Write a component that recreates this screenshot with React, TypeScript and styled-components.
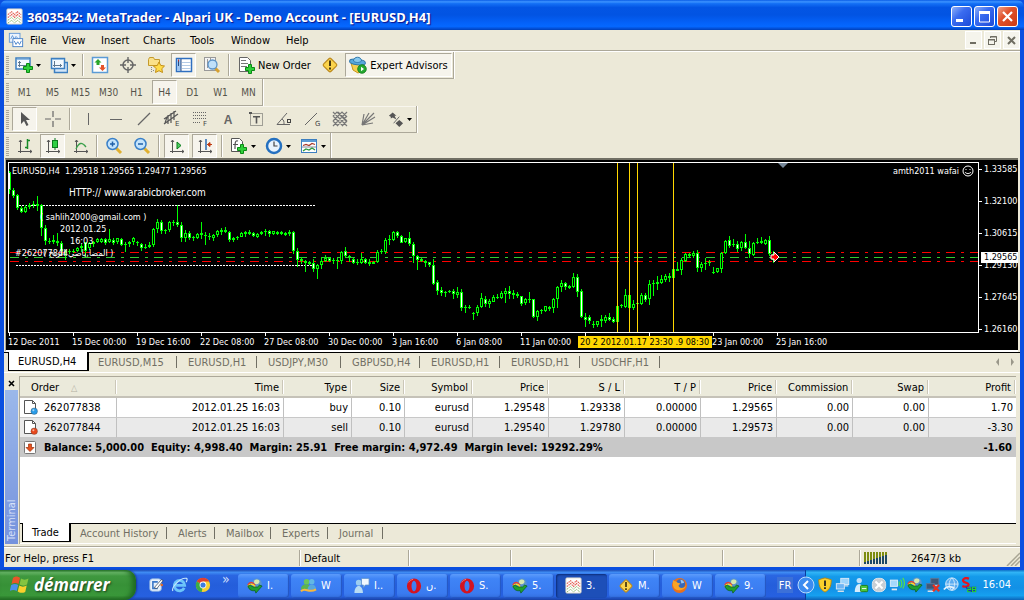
import React from 'react';
import styled, { createGlobalStyle, css } from 'styled-components';

const UI_FONT = '"DejaVu Sans Condensed", "Noto Sans", sans-serif';
const FACE = '#ece9d8';
const SHADE = '#aca899';

const GlobalStyle = createGlobalStyle`
  * { box-sizing: border-box; }
  body { margin: 0; background: #245edb; font-family: ${UI_FONT}; font-size: 11px; line-height: 13px; color: #000; }
  button { font: inherit; color: inherit; background: none; border: 0; padding: 0; margin: 0; cursor: default; }
  svg { display: block; flex: none; }
`;

/* ---------- window frame ---------- */

const Screen = styled.div`
  min-height: 100vh;
  display: flex;
  flex-direction: column;
`;

const AppWindow = styled.main`
  flex: 1;
  display: flex;
  flex-direction: column;
  background: #0a4fe0;
`;

const TitleBar = styled.header`
  height: 30px;
  flex: none;
  display: flex;
  align-items: center;
  padding: 3px 6px 0 6px;
  gap: 4px;
  border-radius: 7px 7px 0 0;
  background: linear-gradient(#0a5ce6 0, #3c93ff 6%, #1470f5 12%, #0355e4 25%, #0254e3 50%, #0461f8 75%, #0568ff 88%, #0350d8 95%, #0040b8 100%);
`;

const Title = styled.h1`
  margin: 0;
  flex: 1;
  color: #fff;
  font: bold 13px/18px "Noto Sans", sans-serif;
  text-shadow: 1px 1px 1px #0f1089;
  white-space: nowrap;
`;

const CaptionButtons = styled.div`
  display: flex;
  gap: 2px;
`;

const CaptionButton = styled.button<{ $close?: boolean }>`
  width: 21px;
  height: 21px;
  display: grid;
  place-items: center;
  border: 1px solid #fff;
  border-radius: 3px;
  background: ${p => p.$close
    ? 'linear-gradient(135deg, #f0a088 0, #e0522c 40%, #cc3a14 100%)'
    : 'linear-gradient(135deg, #8fb0f8 0, #3a6cf0 40%, #1c4ad8 100%)'};
`;

const Client = styled.div`
  flex: 1;
  display: flex;
  flex-direction: column;
  margin: 0 4px 3px;
  background: ${FACE};
`;

const MenuBar = styled.nav`
  height: 22px;
  flex: none;
  display: flex;
  align-items: center;
  padding: 0 0 1px 4px;
  border-bottom: 1px solid #fff;
  box-shadow: inset 0 -1px 0 ${SHADE};
`;

const MenuItem = styled.button<{ $w: number }>`
  width: ${p => p.$w}px;
  padding-left: 6px;
  text-align: left;
`;

const MdiButtons = styled.div`
  display: flex;
  gap: 2px;
  margin-left: auto;
`;

const MdiButton = styled.button`
  width: 17px;
  height: 18px;
  display: grid;
  place-items: center;
  background: #f5f4ec;
  border: 1px solid #fff;
`;

/* ---------- toolbars ---------- */

const Toolbar = styled.div<{ $last?: boolean }>`
  align-self: flex-start;
  flex: none;
  height: ${p => (p.$last ? 25 : 27)}px;
  display: flex;
  align-items: flex-start;
  gap: 3px;
  padding: 1px 1px 0 2px;
  border-right: 1px solid ${SHADE};
  box-shadow: 1px 0 0 #fff, inset 0 1px 0 #f8f6ee;
  border-bottom: ${p => (p.$last ? 0 : 1)}px solid ${SHADE};
`;

const Grip = styled.span`
  width: 3px;
  height: 19px;
  margin-top: 3px;
  background: repeating-linear-gradient(#aaa798 0 1px, ${FACE} 1px 2px);
`;

const ToolButton = styled.button<{ $pressed?: boolean; $w?: number }>`
  width: ${p => p.$w ?? 25}px;
  height: 24px;
  display: flex;
  align-items: center;
  justify-content: center;
  gap: 3px;
  white-space: nowrap;
  color: ${p => (p.$w && p.$w > 60 ? '#000' : '#55534a')};
  ${p => p.$pressed && css`
    background: #f6f4ec;
    border: 1px solid;
    border-color: ${SHADE} #fff #fff ${SHADE};
  `}
`;

const PeriodText = styled.span`
  font-size: 10px;
`;

const Separator = styled.span<{ $m?: number }>`
  width: 2px;
  height: 22px;
  margin: 1px ${p => p.$m ?? 0}px 0;
  border-left: 1px solid ${SHADE};
  border-right: 1px solid #fff;
`;

/* ---------- chart ---------- */

const ChartPanel = styled.section`
  flex: none;
  display: grid;
  grid-template-columns: 1fr 39px;
  grid-template-rows: 171px 17px;
  margin: 0 2px 0 1px;
  padding: 2px 0 0 2px;
  background: #000;
  color: #fff;
  border-top: 2px solid #716f64;
  border-left: 1px solid ${SHADE};
  border-bottom: 2px solid #fff;
  font-size: 9px;
  line-height: 12px;
`;

const Plot = styled.div`
  position: relative;
  border: 1px solid #fff;
  overflow: hidden;
`;

const ChartLabel = styled.span<{ $x: number; $y: number; $large?: boolean }>`
  position: absolute;
  left: ${p => p.$x}px;
  top: ${p => p.$y}px;
  font-size: ${p => (p.$large ? 10 : 9)}px;
  white-space: pre;
`;

const AccountLabel = styled.span`
  position: absolute;
  right: 4px;
  top: 2px;
  display: flex;
  align-items: center;
  gap: 3px;
`;

const ShiftMark = styled.span`
  position: absolute;
  left: 769px;
  top: 0;
  border: 5px solid transparent;
  border-top-color: #778899;
  border-bottom: 0;
`;

const PriceAxis = styled.div`
  position: relative;
  display: flex;
  flex-direction: column;
`;

const PriceTick = styled.span`
  flex: none;
  height: 32px;
  padding-left: 5px;
  background: linear-gradient(#fff, #fff) 0 7px / 3px 1px no-repeat;
  line-height: 15px;
`;

const PriceTag = styled.span`
  position: absolute;
  left: 2px;
  right: 0;
  top: 90px;
  height: 11px;
  padding-left: 3px;
  background: #fff;
  color: #000;
  line-height: 11px;
`;

const TimeAxis = styled.div`
  position: relative;
  display: flex;
  overflow: hidden;
`;

const TimeTick = styled.span`
  flex: none;
  width: 64px;
  height: 17px;
  padding-top: 3px;
  white-space: nowrap;
  background: linear-gradient(#fff, #fff) 1px 0 / 1px 3px no-repeat;
`;

const TimeMark = styled.span`
  position: absolute;
  left: 570px;
  top: 3px;
  width: 134px;
  height: 12px;
  padding-left: 2px;
  background: #ffd700;
  color: #000;
  white-space: nowrap;
`;

/* ---------- tab strips ---------- */

const TabStrip = styled.div<{ $h: number; $indent: number }>`
  flex: none;
  height: ${p => p.$h}px;
  display: flex;
  align-items: flex-start;
  padding-left: ${p => p.$indent}px;
  border-top: 1px solid #000;
  border-bottom: 1px solid #fff;
`;

const Tab = styled.button<{ $w: number; $active?: boolean }>`
  width: ${p => p.$w}px;
  height: 18px;
  flex: none;
  padding-left: 9px;
  text-align: left;
  white-space: nowrap;
  color: #716f64;
  background: linear-gradient(#716f64, #716f64) right 2px top 3px / 1px 12px no-repeat;
  ${p => p.$active && css`
    height: 19px;
    margin-top: -1px;
    color: #000;
    background: #fff;
    border: solid #000;
    border-width: 0 2px 1px 1px;
  `}
`;

const TabScroll = styled.div`
  display: flex;
  gap: 10px;
  margin: 5px 5px 0 auto;
`;

/* ---------- terminal ---------- */

const Terminal = styled.section`
  flex: 1;
  display: flex;
  padding: 3px 0 0 1px;
`;

const TerminalCaption = styled.div`
  width: 13px;
  flex: none;
  display: flex;
  flex-direction: column;
  align-items: center;
`;

const CloseTerminal = styled.button`
  height: 14px;
  width: 13px;
  display: grid;
  place-items: center;
`;

const TerminalTitle = styled.div`
  flex: 1;
  width: 13px;
  padding-top: 3px;
  background: linear-gradient(#7592dd, #9bb8ea);
  color: #d6e0f8;
  writing-mode: vertical-rl;
  transform: rotate(180deg);
  line-height: 13px;
`;

const TerminalBody = styled.div`
  flex: 1;
  display: flex;
  flex-direction: column;
  margin: 0 4px 0 1px;
  border-left: 1px solid ${SHADE};
`;

const OrderArea = styled.div`
  flex: 1;
  min-height: 147px;
  background: #fff;
  border-top: 1px solid ${SHADE};
`;

const OrderTable = styled.table`
  width: 100%;
  border-collapse: separate;
  border-spacing: 0;
  table-layout: fixed;
`;

const HeadCell = styled.th<{ $first?: boolean }>`
  height: 21px;
  padding: 1px 5px 0 11px;
  background: linear-gradient(#fff, #fff) right 0 top 3px / 1px 14px no-repeat,
    linear-gradient(#cbc7b8, #cbc7b8) right 1px top 3px / 1px 14px no-repeat, #ebeadb;
  border-bottom: 2px solid #c5c2b8;
  font-weight: normal;
  text-align: ${p => (p.$first ? 'left' : 'right')};
  white-space: nowrap;
`;

const OrderRow = styled.tr<{ $alt?: boolean }>`
  background: ${p => (p.$alt ? '#eaeaea' : '#fff')};
`;

const Cell = styled.td<{ $last?: boolean }>`
  height: 20px;
  padding: 0 3px 0 4px;
  border-right: ${p => (p.$last ? 0 : 1)}px solid #c0c0c0;
  border-bottom: 1px solid #c8c8c8;
  text-align: right;
  white-space: nowrap;
`;

const OrderId = styled.div`
  display: flex;
  align-items: center;
  gap: 6px;
`;

const SummaryRow = styled.tr`
  background: #c8c8c8;
  font-weight: bold;
`;

const SummaryCell = styled.td<{ $right?: boolean }>`
  height: 19px;
  padding: 0 4px 0 4px;
  text-align: ${p => (p.$right ? 'right' : 'left')};
  white-space: pre;
`;

const SortMark = styled.span`
  color: #b4b1a4;
  margin-left: 12px;
  font-size: 9px;
  line-height: 9px;
`;

/* ---------- status bar ---------- */

const StatusBar = styled.footer`
  flex: none;
  height: 21px;
  margin-top: 2px;
  display: flex;
  align-items: center;
  padding-top: 2px;
  border-top: 1px solid ${SHADE};
  box-shadow: inset 0 1px 0 #fff;
`;

const Pane = styled.div<{ $w?: number; $first?: boolean }>`
  ${p => (p.$w ? `width: ${p.$w}px;` : 'flex: 1;')}
  height: 16px;
  display: flex;
  align-items: center;
  padding-left: ${p => (p.$first ? 1 : 4)}px;
  border-left: ${p => (p.$first ? 0 : 1)}px solid ${SHADE};
  box-shadow: ${p => (p.$first ? 'none' : 'inset 1px 0 0 #fff')};
  white-space: nowrap;
`;

const Traffic = styled.span`
  margin-left: 23px;
`;

const Resize = styled.span`
  margin: 2px 0 0 auto;
`;

/* ---------- taskbar ---------- */

const Taskbar = styled.nav`
  flex: none;
  height: 30px;
  display: flex;
  color: #fff;
  background: linear-gradient(#1f4fb8 0, #3f8cf3 8%, #2a66e2 18%, #245edb 50%, #2660e0 88%, #1941a5 100%);
`;

const StartButton = styled.button`
  width: 136px;
  flex: none;
  display: flex;
  align-items: center;
  gap: 4px;
  padding: 0 0 1px 10px;
  border-radius: 0 10px 12px 0;
  background: linear-gradient(#2f7a2f 0, #6cba6c 8%, #3f983f 20%, #379137 50%, #3a983a 85%, #246e24 100%);
  box-shadow: inset -4px 0 5px #1f6a22, 1px 0 2px #17389a;
  color: #fff;
  font: italic bold 17px/20px "Noto Sans", sans-serif;
  text-shadow: 1px 1px 2px #1c401c;
`;

const QuickLaunch = styled.div`
  width: 102px;
  flex: none;
  display: flex;
  align-items: center;
  gap: 7px;
  padding: 0 0 1px 12px;
`;

const Chevron = styled.span`
  font-size: 14px;
  padding: 0 0 10px 4px;
  color: #cfdffb;
`;

const Tasks = styled.div`
  flex: 1;
  display: flex;
  align-items: center;
  gap: 2px;
  padding-top: 1px;
`;

const TaskButton = styled.button<{ $active?: boolean }>`
  flex: 0 1 51px;
  height: 24px;
  display: flex;
  align-items: center;
  gap: 4px;
  padding-left: 9px;
  border-radius: 3px;
  background: ${p => (p.$active ? '#1d4fb8' : 'linear-gradient(#5c9bfb 0, #3f84f6 20%, #3a7bf0 80%, #336ede 100%)')};
  box-shadow: ${p => (p.$active ? 'inset 1px 1px 2px #0d2d78' : 'inset -1px -1px 1px #2455c0')};
  white-space: nowrap;
`;

const Language = styled.button`
  width: 16px;
  height: 16px;
  margin: 7px 12px 0 0;
  background: #3c70d8;
`;

const Tray = styled.div`
  position: relative;
  width: 219px;
  flex: none;
  display: flex;
  align-items: center;
  gap: 2px;
  padding: 0 13px 1px 11px;
  border-left: 1px solid #0b3c9c;
  background: linear-gradient(#0f72c8 0, #30b4f6 8%, #149aea 22%, #1290e6 60%, #16a0f0 85%, #0c64b8 100%);
`;

const HideIcons = styled.button`
  position: absolute;
  left: -9px;
  top: 6px;
`;

const Clock = styled.time`
  margin-left: auto;
`;

/* ---------- icons ---------- */

type IconProps = { size?: number; children: React.ReactNode };
const Icon = ({ size = 18, children }: IconProps) => (
  <svg width={size} height={size} viewBox="0 0 18 18" fill="none" aria-hidden="true">{children}</svg>
);

const Plus = ({ x, y }: { x: number; y: number }) => (
  <path transform={`translate(${x} ${y})`} d="M3.500.500h3v3h3v3h-3v3h-3v-3h-3v-3h3z" fill="#2fd03a" stroke="#0a8a14" />
);

const DropArrow = () => (
  <svg width="5" height="3" viewBox="0 0 5 3" aria-hidden="true"><path d="M0 0h5L2.500 3z" fill="#000" /></svg>
);

const LogoIcon = ({ size = 16 }: { size?: number }) => (
  <Icon size={size}>
    <rect x="1" y="1" width="16" height="16" rx="1" fill="#fff" stroke="#e4dccc" />
    <path d="M2 7l4-3 3 3 3-3 4 3M2 10l4-3 3 3 3-3 4 3" stroke="#e0564a" strokeWidth="1.200" strokeDasharray="1.500 .7" />
    <path d="M2 13l4-3 3 3 3-3 4 3M2 16l4-3 3 3 3-3 4 3" stroke="#7fb05c" strokeDasharray="1.500 .7" />
  </Icon>
);

const MdiIcon = () => (
  <Icon size={16}>
    <rect x="1.500" y="1.500" width="12" height="10" fill="#eaf3fd" stroke="#5b94d6" />
    <path d="M3 8l2-4 2 4 2-3 2 2" stroke="#5b94d6" />
    <rect x="5.500" y="7.500" width="11" height="9" fill="#fff" stroke="#3f7cc8" />
    <path d="M7 10l2 4 2-3 2 3 2-4" stroke="#3f7cc8" />
  </Icon>
);

const NewChartIcon = () => (
  <Icon>
    <rect x="1" y="2" width="14" height="11" fill="#f4f9fe" stroke="#3d7fc0" strokeWidth="1.500" />
    <path d="M2 3.500h12" stroke="#8fbce6" /><path d="M4.500 5v6M3 9.500h9M3 6.500h3" stroke="#607890" />
    <Plus x={8} y={7} />
  </Icon>
);
const ProfilesIcon = () => (
  <Icon>
    <rect x="4.500" y="6.500" width="13" height="10" fill="#d4e6f8" stroke="#3d7fc0" strokeWidth="1.500" />
    <rect x="1.500" y="2.500" width="13" height="10" fill="#f4f9fe" stroke="#3d7fc0" strokeWidth="1.500" />
    <path d="M2 3.500h12" stroke="#8fbce6" /><path d="M4.500 5v6M3 9.500h9M10.500 8v3" stroke="#607890" />
  </Icon>
);
const MarketWatchIcon = () => (
  <Icon>
    <rect x="1.500" y="1.500" width="15" height="15" fill="#fff" stroke="#5b9bd5" strokeWidth="1.500" />
    <path d="M7 3L3.500 6.500h2V9h3V6.500h2z" fill="#2aa52a" /><path d="M11.500 15L8 11.500h2V9h3v2.500h2z" fill="#e5532a" />
  </Icon>
);
const DataWindowIcon = () => (
  <Icon>
    <circle cx="9" cy="9" r="5" stroke="#666" strokeWidth="1.500" />
    <path d="M9 1v6M9 11v6M1 9h6M11 9h6" stroke="#666" strokeWidth="1.400" />
  </Icon>
);
const FavoritesIcon = () => (
  <Icon>
    <path d="M1.500 3.500l1-2h4l1 2h5v6h-11z" fill="#fbe189" stroke="#c49a2c" />
    <path d="M4.500 11v6M6 14.500h2" stroke="#888" strokeDasharray="1 1" />
    <path d="M12 6l1.700 3.400 3.800.6-2.700 2.700.7 3.800-3.500-1.800-3.500 1.800.7-3.800L6.500 10l3.800-.6z" fill="#ffdc4a" stroke="#c48f14" />
  </Icon>
);
const TerminalIcon = () => (
  <Icon>
    <rect x="1.500" y="2.500" width="15" height="13" fill="#fff" stroke="#2f6fc0" strokeWidth="1.500" />
    <rect x="2" y="3" width="4" height="12" fill="#9cc4f0" />
    <path d="M7 6.500h9M7 9.500h9M7 12.500h9" stroke="#b4cbe6" /><path d="M3.500 4v6M6 3v12" stroke="#2a4a80" /><path d="M3 4.500h1" stroke="#c03030" strokeWidth="2" />
  </Icon>
);
const TesterIcon = () => (
  <Icon>
    <rect x="1.500" y="1.500" width="11" height="13" fill="#f4f4f4" stroke="#999" />
    <path d="M4.500 3v9M7.500 2v4M10.500 4v3" stroke="#999" />
    <path d="M12 12l4 4" stroke="#d6a030" strokeWidth="3" />
    <circle cx="9.500" cy="8.500" r="4.500" fill="#bfe0fa" stroke="#5c93c8" strokeWidth="1.300" />
  </Icon>
);
const NewOrderIcon = () => (
  <Icon>
    <path d="M2.500 1.500h8l3 3v11h-11z" fill="#fff" stroke="#666" />
    <path d="M4 4.500h5M4 7.500h7M4 10.500h6" stroke="#777" /><Plus x={8} y={8} />
  </Icon>
);
const WarnIcon = ({ size = 18 }: { size?: number }) => (
  <Icon size={size}>
    <rect x="3.800" y="3.800" width="10.400" height="10.400" rx="1.500" transform="rotate(45 9 9)" fill="#fbd44c" stroke="#bd8a1c" strokeWidth="1.200" />
    <path d="M8 4.500h2v5.500H8zM8 11.500h2v2H8z" fill="#4a3a10" />
  </Icon>
);
const ExpertIcon = () => (
  <Icon>
    <path d="M2 7l13 1-2 7-4 2-5-3z" fill="#f6cf50" stroke="#c8961c" />
    <ellipse cx="8.500" cy="6" rx="8" ry="2.800" transform="rotate(8 8 6)" fill="#58a8dc" stroke="#2f78ac" />
    <path d="M4.500 5c0-5 8-5 8 0-2 2-6 2-8 0z" fill="#86c8ee" stroke="#2f78ac" />
    <circle cx="13" cy="13" r="4.300" fill="#25a830" stroke="#0c7c18" strokeWidth=".8" /><path d="M12 10.800v4.400l3-2.200z" fill="#fff" />
  </Icon>
);

const CursorIcon = () => (
  <Icon><path d="M5 2v12l3-3 2.500 5 2-1-2.500-5h4z" fill="#555" /></Icon>
);
const line = (d: string, w = 1) => <Icon><path d={d} stroke="#666" strokeWidth={w} /></Icon>;
const smallLetter = (x: number, y: number, s: string) => (
  <text x={x} y={y} fontSize="7" fontFamily="DejaVu Sans" fill="#444">{s}</text>
);
const ChannelIcon = () => (
  <Icon>
    <path d="M1 9L13 1M1 14L15 4M5 14V5M8 13V3M11 10V1M2 13l2-6" stroke="#555" strokeWidth="1.200" />{smallLetter(12, 16, 'E')}
  </Icon>
);
const FiboIcon = () => (
  <Icon>
    <path d="M2 2.500h14M2 5.500h14M2 8.500h14M2 12.500h8" stroke="#666" strokeDasharray="1 1" />{smallLetter(12, 16, 'F')}
  </Icon>
);
const LetterA = () => (
  <Icon><text x="9" y="14" textAnchor="middle" fontSize="12" fontWeight="bold" fontFamily="Liberation Sans" fill="#666">A</text></Icon>
);
const LabelIcon = () => (
  <Icon>
    <rect x="3.500" y="3.500" width="12" height="12" stroke="#555" strokeDasharray="1 1" />
    <path d="M2 2h3v2H2z" fill="#555" /><path d="M6 6.800h7M9.500 6v7.500" stroke="#555" strokeWidth="1.600" />
  </Icon>
);
const AngleIcon = () => (
  <Icon><path d="M12 3L2 14.500h13M7 9c2 1 2 3 2 5" stroke="#666" /><rect x="12.500" y="9.500" width="3" height="3" stroke="#444" /></Icon>
);
const GannLineIcon = () => (
  <Icon><path d="M2 15L14 3" stroke="#666" />{smallLetter(12, 16, 'G')}</Icon>
);
const GridIcon = () => (
  <Icon>
    <path d="M2 6l4-4 10 10M2 11l9-9 5 5M2 16L16 2M6 16L16 6M11 16l5-5M2 11l5 5M2 6l10 10M2 2l14 14M7 2l9 9" stroke="#777" strokeWidth="1.200" />
  </Icon>
);
const FanIcon = () => (
  <Icon><path d="M3 15L5 4M3 15L10 3M3 15L15 3M3 15L16 7M3 15L14 13" stroke="#777" strokeWidth="1.200" /></Icon>
);
const ArrowsIcon = () => (
  <Icon size={17}>
    <path d="M2 5l4-3.500 4 3.500H8l2 4-4-2-2 1V6zM9 13l4-3.500 4 3.500-4 4z" fill="#555" /><path d="M13 6l-6 7" stroke="#666" />
  </Icon>
);

const axes = <path d="M4.500 3v13M2 14.500h14M3 5l1.500-2L6 5M14 13l2 1.500-2 1.500" stroke="#555" />;
const BarsIcon = () => <Icon>{axes}<path d="M11.500 2v10M9 10.500h2.500M11.500 3.500H14" stroke="#168a28" strokeWidth="1.500" /></Icon>;
const CandlesIcon = () => (
  <Icon>{axes}<path d="M11 1v12" stroke="#0a7a1c" /><rect x="8.500" y="3.500" width="5" height="7" fill="#2ed043" stroke="#0a7a1c" /></Icon>
);
const LineIcon = () => <Icon>{axes}<path d="M4 12c3-7 6-7 10-2" stroke="#3aa04a" strokeWidth="1.300" /></Icon>;
const ZoomIcon = ({ out }: { out?: boolean }) => (
  <Icon>
    <path d="M11 11l5 5" stroke="#e0b030" strokeWidth="3" />
    <circle cx="7.500" cy="7" r="5.500" fill="#c4e4fc" stroke="#3a80c8" strokeWidth="1.500" />
    <path d={out ? 'M5 7h5' : 'M5 7h5M7.500 4.500v5'} stroke="#2060a8" strokeWidth="1.500" />
  </Icon>
);
const AutoScrollIcon = () => <Icon>{axes}<path d="M9 5v7l4-3.500z" fill="#4cd060" stroke="#0a7a1c" /></Icon>;
const ShiftIcon = () => (
  <Icon>{axes}<path d="M10 2v11" stroke="#2a6ab0" strokeWidth="1.500" /><path d="M11 7.500h5M14 5.500l-2.500 2 2.500 2z" stroke="#c03a10" fill="#c03a10" /></Icon>
);
const IndicatorIcon = () => (
  <Icon>
    <path d="M1.500 1.500h8l3 3v10h-11z" fill="#fff" stroke="#555" />
    <path d="M8 4c-3-1-3 2-3 8M3 7.500h5" stroke="#555" strokeWidth="1.200" /><Plus x={7} y={7} />
  </Icon>
);
const ClockIcon = () => (
  <Icon>
    <circle cx="9" cy="9" r="7" fill="#e8f3fd" stroke="#2470c0" strokeWidth="2.500" />
    <path d="M9 4.500V9h3.500" stroke="#444" strokeWidth="1.200" />
  </Icon>
);
const TemplateIcon = () => (
  <Icon>
    <rect x="1.500" y="2.500" width="15" height="13" fill="#fff" stroke="#3d7fc0" /><path d="M2 4h14" stroke="#5b9bd5" strokeWidth="2" />
    <path d="M3 8.500l3-1 3 1 3-2 3 1" stroke="#a83a2a" strokeWidth="1.300" /><path d="M2 10h14" stroke="#889" />
    <path d="M3 14l3-2 3 1 3-2 3 2" stroke="#2a9a3a" strokeWidth="1.300" />
  </Icon>
);

const OrderDoc = ({ color }: { color: string }) => (
  <svg width="14" height="15" viewBox="0 0 14 15" aria-hidden="true">
    <path d="M.5.500h8l3 3v10H.5z" fill="#fff" stroke="#555" /><path d="M8.500.500v3h3" fill="none" stroke="#555" />
    <circle cx="10.200" cy="11.200" r="3.300" fill={color} stroke="#333" strokeOpacity=".5" strokeWidth=".6" />
    <circle cx="9.400" cy="10.200" r="1" fill="#fff" fillOpacity=".6" />
  </svg>
);
const BalanceIcon = () => (
  <svg width="14" height="15" viewBox="0 0 14 15" aria-hidden="true">
    <rect x=".5" y="1.500" width="11" height="12" rx="1" fill="#fff" stroke="#777" />
    <path d="M4.500 4h3v3.500H10L6 11.500 2 7.500h2.500z" fill="#e8501c" stroke="#98300c" strokeWidth=".7" />
  </svg>
);

const WindowsFlag = () => (
  <svg width="20" height="19" viewBox="0 0 20 19" aria-hidden="true">
    <path d="M3 3c2-2 5-2 7 0L8.500 9C6.500 7.500 4 7.500 1.500 9z" fill="#e8562a" />
    <path d="M11 3.500c2 1.500 5 1.500 7.500 0L17 9.500c-2 1.500-5 1.500-7.500 0z" fill="#84c440" />
    <path d="M1.200 10c2.500-1.500 5-1.500 7 0l-1.500 6c-2-1.500-4.500-1.500-7 0z" fill="#4a90ec" />
    <path d="M9.200 10.500c2.500 1.500 5 1.500 7.500 0L15.200 17c-2.500 1.200-5.500 1.200-7.500-.5z" fill="#fad02c" />
  </svg>
);
const DesktopIcon = () => (
  <Icon size={16}>
    <rect x="2" y="2" width="13" height="14" rx="3" fill="#e8f2fc" stroke="#88aee0" />
    <path d="M11 5.500H5.500v7.500H11" stroke="#3a78c8" strokeWidth="1.800" /><path d="M7 12l8-9 2 1-7 9z" fill="#fff" stroke="#345" strokeWidth=".8" />
    <circle cx="15.500" cy="9" r="1.500" fill="#e06a2a" />
  </Icon>
);
const IeIcon = ({ size = 17 }: { size?: number }) => (
  <Icon size={size}>
    <path d="M14 12.500A5.500 5.500 0 1 1 14.500 10H5" stroke="#6cc4fa" strokeWidth="3" />
    <path d="M2 16C0 12 10 1 16.500 2.500c1 .5.500 2.500-.5 4" stroke="#c4e6fc" strokeWidth="1.200" />
  </Icon>
);
const ChromeIcon = () => (
  <Icon size={16}>
    <circle cx="9" cy="9" r="8" fill="#f8d030" /><path d="M9 9L2 5a8 8 0 0 1 14 0H9z" fill="#e04030" />
    <path d="M9 9l-1.500 8A8 8 0 0 1 2 5z" fill="#3cab48" /><circle cx="9" cy="9" r="3.800" fill="#fff" /><circle cx="9" cy="9" r="2.900" fill="#3c7ce0" />
  </Icon>
);
const IdmIcon = () => (
  <Icon size={16}>
    <circle cx="11" cy="6" r="5.500" fill="#5a94cc" /><path d="M8 3c2-2 6-2 6 1s-4 4-6 2z" fill="#d6e8b0" />
    <path d="M1 8c2-4 5-4 8 0" stroke="#e84030" strokeWidth="1.800" /><path d="M1 10c2-4 6-4 8 0" stroke="#f8d830" strokeWidth="1.800" />
    <path d="M1 9c1 5 6 6 8 5l1 3 7-8-3-1-2 2c-4 0-5 1-8-2z" fill="#1fa030" stroke="#0c5c18" strokeWidth=".8" />
  </Icon>
);
const MessengerIcon = () => (
  <Icon size={17}>
    <circle cx="7" cy="5" r="3" fill="#6cc45c" /><path d="M1 13c0-7 11-7 11 0z" fill="#5cb450" />
    <circle cx="12.500" cy="5" r="2.800" fill="#62b8e4" /><path d="M8 14c0-8 9-8 9-1z" fill="#58a8dc" />
    <path d="M1 15c5-5 8 3 16-2" stroke="#f8b83c" strokeWidth="2.200" />
  </Icon>
);
const ChatIcon = () => (
  <Icon size={17}>
    <circle cx="6" cy="6" r="3" fill="#9ccdf0" /><path d="M1.500 17c0-10 9-10 9 0z" fill="#b8dcf4" />
    <path d="M9 1.500h8v7h-4l-2 3v-3H9z" fill="#f0f8ff" stroke="#5c90c8" strokeWidth=".8" />
  </Icon>
);
const OperaIcon = () => (
  <Icon size={16}>
    <path fillRule="evenodd" d="M9 .5a8 8.500 0 0 1 0 17a8 8.500 0 0 1 0-17zM9 3a2.800 6 0 0 0 0 12a2.800 6 0 0 0 0-12z" fill="#d41420" />
    <path d="M3 5c1-2 3-3 5-3.500" stroke="#f08080" />
  </Icon>
);
const FirefoxIcon = () => (
  <Icon size={17}>
    <circle cx="9" cy="9" r="8" fill="#e8701c" /><circle cx="10" cy="7.500" r="5" fill="#3868b8" />
    <path d="M2 3c1 2 3 1 5 3l3 1-2 2c0 3 5 4 8 0-1 6-13 8-14-1z" fill="#f8a424" />
    <path d="M10 3c2 0 3 1 4 3l-3 1z" fill="#9cc8f0" />
  </Icon>
);
const ShieldIcon = () => (
  <Icon size={16}><path d="M9 1l7 2c0 8-2 11-7 14C4 14 2 11 2 3z" fill="#fbd02c" stroke="#b8860c" /><path d="M8 4h2v6H8zM8 11.500h2v2H8z" fill="#222" /></Icon>
);
const NetworkIcon = ({ off }: { off?: boolean }) => (
  <Icon size={16}>
    <rect x="6.500" y="1.500" width="9" height="7" fill={off ? '#3f5878' : '#9cd4fc'} stroke={off ? '#5c7898' : '#e0ecf8'} />
    <rect x="1.500" y="7.500" width="9" height="6" fill={off ? '#3f5878' : '#6cb4f4'} stroke={off ? '#5c7898' : '#e0ecf8'} /><path d="M3 16h7M11 10h4" stroke="#d6dfe8" strokeWidth="1.500" />
    {off && <path d="M9 9l7 7M16 9l-7 7" stroke="#e83020" strokeWidth="2.500" />}
  </Icon>
);
const BuddyIcon = () => (
  <Icon size={16}><circle cx="7" cy="4" r="3" fill="#bfe0fa" /><path d="M2 17c0-12 10-12 10 0z" fill="#d6ecfc" /><rect x="8.500" y="9.500" width="8" height="7" rx="1" fill="#4cc43c" stroke="#1c7c14" /><path d="M10 13h5" stroke="#fff" /></Icon>
);
const SkypeIcon = () => (
  <Icon size={16}><rect x="1.500" y="1.500" width="15" height="15" rx="6" fill="#c8ced4" stroke="#e4e8ec" /><path d="M5 5l8 8M13 5l-8 8" stroke="#fff" strokeWidth="2.200" /></Icon>
);
const WirelessIcon = () => (
  <Icon size={16}><rect x="1.500" y="3.500" width="8" height="7" fill="#a4d8fc" stroke="#e4f0fa" /><path d="M3 14h6" stroke="#dfe8f0" strokeWidth="2" /><path d="M11 5c1 2 1 3 0 5M13 3c2 3 2 6 0 9M15.500 1c2.500 4 2.500 8 0 12" stroke="#58e048" strokeWidth="1.300" /></Icon>
);
const GlobeIcon = () => (
  <Icon size={16}><circle cx="10" cy="8" r="7" fill="#5cacf0" stroke="#e4f2fc" /><path d="M3 8h14M10 1c-4 4-4 10 0 14M10 1c4 4 4 10 0 14" stroke="#d6ecfc" /><path d="M1 14c3-4 8-4 12-1" stroke="#e4f2fc" strokeWidth="2" /></Icon>
);
const SIcon = () => (
  <Icon size={16}>
    <path d="M9 2C5 0 1.500 2 2.500 4.500c1 2.500 6 1.500 6 4s-4 3-7 1.500" stroke="#e8141c" strokeWidth="2.500" />
    <path d="M5 11h12v6H8z" fill="#1838b8" />
    <path d="M7 12h4v2H7.500v2.500H11M13 11.500v5h3.500v-5zM13 14h3" stroke="#28d828" strokeWidth="1.200" />
  </Icon>
);

/* ---------- chart data ---------- */

// high, body top, body bottom, low, falling flag; three units to a pixel
type Candle = [number, number, number, number, number];
const UNITS = 3;
const ORIGIN = 8;
const STEP = 4;

const candles: Candle[] = [
  [48,50,105,118,1],[98,105,122,130,1],[117,120,158,165,1],[153,160,170,173,1],[150,155,170,175,0],[145,151,157,162,0],[139,147,150,160,0],[123,147,153,168,0],
  [147,150,218,242,1],[210,220,258,270,1],[248,257,260,268,0],[240,254,260,268,0],[233,257,263,272,1],[257,265,288,300,1],[285,289,292,315,1],[283,287,290,297,0],
  [283,287,291,295,0],[275,278,288,292,0],[268,273,280,290,0],[260,262,288,305,1],[262,265,278,285,0],[258,262,267,275,0],[250,252,262,265,0],[248,252,262,265,0],
  [248,252,263,270,1],[222,252,262,265,0],[248,255,265,270,1],[248,250,262,268,0],[250,252,270,272,1],[262,267,270,290,0],[257,262,267,275,0],[247,250,262,270,0],
  [258,260,265,272,1],[265,268,278,288,1],[268,275,278,283,0],[262,270,276,280,0],[218,222,270,275,0],[193,202,222,235,0],[195,202,227,238,1],[222,226,228,238,0],
  [197,202,226,230,0],[195,200,205,213,0],[150,202,210,215,1],[200,210,250,260,1],[225,235,250,262,0],[228,235,250,255,1],[243,247,250,257,0],[235,238,250,252,0],
  [200,235,240,252,1],[232,240,243,270,1],[235,243,247,255,1],[238,240,248,258,0],[225,228,240,245,0],[218,225,232,240,0],[217,226,232,235,1],[228,230,255,262,1],
  [245,248,254,262,0],[243,247,250,255,0],[232,235,245,247,0],[227,230,237,247,0],[225,232,238,240,1],[232,235,242,247,1],[233,237,245,250,0],[228,230,238,240,0],
  [222,229,231,243,0],[225,229,237,245,1],[227,229,237,240,0],[227,230,236,239,1],[227,231,236,240,1],[232,234,240,243,1],[225,230,238,242,0],[228,230,288,298,1],
  [280,288,315,335,1],[307,312,318,328,1],[315,318,323,350,1],[318,321,326,330,1],[313,324,342,350,1],[328,330,342,372,0],[305,318,330,342,0],[300,308,318,320,0],
  [305,308,318,322,1],[310,315,317,328,0],[308,314,316,342,0],[288,290,318,328,0],[275,288,302,310,1],[300,302,304,320,0],[310,313,323,328,1],[312,320,322,330,0],
  [293,312,324,327,0],[310,313,324,328,1],[313,322,326,333,1],[318,320,327,328,0],[285,290,320,325,0],[282,288,291,298,0],[248,255,290,297,0],[240,252,255,270,0],
  [228,232,254,258,0],[228,232,243,248,1],[240,243,263,265,1],[248,250,262,265,0],[230,250,268,272,1],[262,267,304,323,1],[300,304,314,345,1],[308,313,318,322,1],
  [315,318,323,335,1],[320,322,331,335,1],[313,330,386,390,1],[375,382,407,420,1],[395,405,415,423,1],[407,411,414,425,0],[405,408,410,413,0],[403,408,418,432,1],
  [397,410,419,428,0],[402,410,460,467,1],[450,457,460,473,0],[450,456,459,462,0],[470,473,476,495,0],[450,457,475,482,0],[413,430,457,460,0],[423,432,446,455,1],
  [433,438,446,460,0],[420,427,440,440,0],[418,427,430,432,0],[407,415,430,432,0],[398,408,416,443,0],[392,408,416,432,1],[405,415,420,432,1],[410,417,424,430,1],
  [422,424,446,453,1],[430,433,445,450,0],[410,432,434,445,0],[432,433,487,490,1],[465,468,487,498,0],[462,466,468,477,0],[452,454,467,470,0],[452,455,462,468,1],
  [428,433,460,473,0],[392,395,433,460,0],[375,385,396,410,0],[382,385,397,405,1],[390,394,398,402,0],[353,366,396,400,0],[357,367,410,425,1],[402,408,487,488,1],
  [473,487,496,515,1],[480,487,498,507,1],[498,507,511,518,1],[497,499,511,515,0],[480,492,499,517,0],[480,487,497,503,0],[475,487,495,497,1],[487,491,502,505,1],
  [450,452,502,503,0],[447,450,454,458,1],[403,420,455,458,0],[420,421,458,460,1],[435,446,458,465,0],[443,445,447,450,0],[415,420,446,450,0],[413,420,434,440,1],
  [375,387,433,450,0],[375,383,388,422,0],[363,382,386,405,0],[360,372,384,388,0],[358,363,374,382,0],[353,363,370,380,1],[342,343,370,372,0],[322,343,347,348,0],
  [310,316,346,360,0],[293,297,317,322,0],[295,298,304,308,1],[288,293,303,308,0],[285,293,338,350,1],[320,328,338,350,0],[310,323,328,345,0],[315,320,325,333,1],
  [335,351,355,356,0],[338,340,352,353,0],[292,295,341,353,0],[254,257,295,297,0],[243,256,272,278,1],[252,266,269,277,0],[258,267,281,290,1],[258,262,280,287,0],
  [237,262,280,282,1],[258,279,298,308,1],[262,264,299,302,0],[250,260,265,267,0],[247,258,263,268,1],[253,256,267,270,0],[243,256,298,302,1],[288,298,315,323,0],
];

const px = (v: number) => Math.round(v / UNITS) - ORIGIN;

const Candles = () => (
  <g shapeRendering="crispEdges">
    {candles.map(([h, t, b, l, down], i) => {
      const x = i * STEP;
      const top = px(t);
      const height = Math.max(1, px(b) - top);
      return (
        <g key={i}>
          <rect x={x} y={px(h)} width="1" height={Math.max(1, px(l) - px(h))} fill="#0f0" />
          <rect x={x - 1} y={top} width="3" height={height} fill="#0f0" />
          {height > 2 && <rect x={x} y={top + 1} width="1" height={height - 2} fill={down ? '#fff' : '#000'} />}
        </g>
      );
    })}
  </g>
);

const levels = [
  { y: 89, color: '#f00' },
  { y: 94, color: '#32cd32' },
  { y: 98, color: '#f00' },
];
const verticals = [608, 620, 628, 664];
const prices = ['1.33585', '1.32100', '1.30615', '1.29130', '1.27645', '1.26160'];
const times = ['12 Dec 2011', '15 Dec 00:00', '19 Dec 16:00', '22 Dec 08:00', '27 Dec 08:00', '30 Dec 00:00', '3 Jan 16:00', '6 Jan 08:00', '11 Jan 00:00', '', '', '23 Jan 00:00', '25 Jan 16:00'];

const Chart = () => (
  <ChartPanel aria-label="EURUSD,H4 chart">
    <Plot>
      <svg width="100%" height="169" aria-hidden="true">
        <g shapeRendering="crispEdges">
          <path d="M7 42.500h299M7 102.500h299" stroke="#fff" strokeDasharray="2 1" />
          {levels.map(l => (
            <line key={l.y} x1="1" x2="100%" y1={l.y + 0.5} y2={l.y + 0.5} stroke={l.color} strokeDasharray="9 6 3 6" />
          ))}
        </g>
        <Candles />
        <g shapeRendering="crispEdges">
          {verticals.map(x => <rect key={x} x={x} y="0" width="1" height="169" fill="#ffd700" />)}
        </g>
        <path d="M762 92h3v-3l5 5-5 5v-3h-3z" fill="#f00" stroke="#fff" />
      </svg>
      <ChartLabel $x={3} $y={2}>{'EURUSD,H4  1.29518 1.29565 1.29477 1.29565'}</ChartLabel>
      <ChartLabel $x={60} $y={24} $large>HTTP:// www.arabicbroker.com</ChartLabel>
      <ChartLabel $x={31} $y={48}>( sahlih2000@gmail.com )</ChartLabel>
      <ChartLabel $x={51} $y={60}>2012.01.25</ChartLabel>
      <ChartLabel $x={61} $y={72}>16:03</ChartLabel>
      <ChartLabel $x={6} $y={84}>#262077844</ChartLabel>
      <ChartLabel $x={34} $y={84}>( المضا,ياضي الربح )</ChartLabel>
      <ShiftMark />
      <AccountLabel>
        amth2011 wafai
        <svg width="12" height="12" viewBox="0 0 12 12" fill="none" stroke="#fff" aria-hidden="true">
          <circle cx="6" cy="6" r="5" /><path d="M4 4v1M8 4v1M3 7c1 2 5 2 6 0" />
        </svg>
      </AccountLabel>
    </Plot>
    <PriceAxis>
      {prices.map(p => <PriceTick key={p}>{p}</PriceTick>)}
      <PriceTag>1.29565</PriceTag>
    </PriceAxis>
    <TimeAxis>
      {times.map((t, i) => <TimeTick key={i}>{t}</TimeTick>)}
      <TimeMark>20 2 2012.01.17 23:30 .9 08:30</TimeMark>
    </TimeAxis>
  </ChartPanel>
);

/* ---------- page data ---------- */

const menus: [string, number][] = [['File', 32], ['View', 39], ['Insert', 42], ['Charts', 47], ['Tools', 41], ['Window', 55], ['Help', 40]];
const periods = ['M1', 'M5', 'M15', 'M30', 'H1', 'H4', 'D1', 'W1', 'MN'];
const chartTabs: [string, number][] = [['EURUSD,M15', 90], ['EURUSD,H1', 80], ['USDJPY,M30', 84], ['GBPUSD,H4', 79], ['EURUSD,H1', 80], ['EURUSD,H1', 80], ['USDCHF,H1', 80]];
const terminalTabs: [string, number][] = [['Account History', 98], ['Alerts', 48], ['Mailbox', 56], ['Experts', 57], ['Journal', 55]];
const columns: [string, number | undefined][] = [
  ['Order', 97], ['Time', 167], ['Type', 68], ['Size', 53], ['Symbol', 68], ['Price', 76], ['S / L', 76],
  ['T / P', 76], ['Price', 76], ['Commission', 76], ['Swap', 76], ['Profit', undefined],
];
const orders = [
  { id: '262077838', color: '#2a9ce8', cells: ['2012.01.25 16:03', 'buy', '0.10', 'eurusd', '1.29548', '1.29338', '0.00000', '1.29565', '0.00', '0.00', '1.70'] },
  { id: '262077844', color: '#e8481c', cells: ['2012.01.25 16:03', 'sell', '0.10', 'eurusd', '1.29540', '1.29780', '0.00000', '1.29573', '0.00', '0.00', '-3.30'] },
];
const panes = [102, 71, 72, 69, 71, 66];
const tasks: [React.ReactNode, string, boolean?][] = [
  [<IdmIcon />, 'I.'], [<MessengerIcon />, 'W'], [<ChatIcon />, 'I..'], [<OperaIcon />, 'ں.'], [<OperaIcon />, 'S.'],
  [<IdmIcon />, '5.'], [<LogoIcon size={17} />, '3.', true], [<WarnIcon size={16} />, 'M.'], [<FirefoxIcon />, 'W'], [<IdmIcon />, '9.'],
];

const Drop = ({ label, children }: { label: string; children: React.ReactNode }) => (
  <ToolButton $w={32} aria-label={label}>{children}<DropArrow /></ToolButton>
);

export default function App() {
  return (
    <Screen>
      <GlobalStyle />
      <AppWindow>
        <TitleBar>
          <LogoIcon size={17} />
          <Title>3603542: MetaTrader - Alpari UK - Demo Account - [EURUSD,H4]</Title>
          <CaptionButtons>
            <CaptionButton aria-label="Minimize"><svg width="13" height="13"><rect x="1" y="9" width="7" height="3" fill="#fff" /></svg></CaptionButton>
            <CaptionButton aria-label="Maximize"><svg width="13" height="13"><path d="M1.500 2v10h10V2" fill="none" stroke="#fff" /><rect x="1" y="1" width="11" height="3" fill="#fff" /></svg></CaptionButton>
            <CaptionButton $close aria-label="Close"><svg width="13" height="13"><path d="M2 2l9 9M11 2l-9 9" stroke="#fff" strokeWidth="2.200" /></svg></CaptionButton>
          </CaptionButtons>
        </TitleBar>
        <Client>
          <MenuBar>
            <MdiIcon />
            {menus.map(([m, w]) => <MenuItem key={m} $w={w}>{m}</MenuItem>)}
            <MdiButtons>
              <MdiButton aria-label="Minimize chart"><svg width="11" height="11"><rect x="2" y="7" width="6" height="2" fill="#6f6d62" /></svg></MdiButton>
              <MdiButton aria-label="Restore chart"><svg width="11" height="11" fill="none" stroke="#6f6d62"><path d="M3.500 3V1.500h6v5H8M3 2h7" /><rect x="1.500" y="4.500" width="6" height="5" /><path d="M1 5h7" /></svg></MdiButton>
              <MdiButton aria-label="Close chart"><svg width="11" height="11"><path d="M2 2l7 7M9 2l-7 7" stroke="#6f6d62" strokeWidth="2" /></svg></MdiButton>
            </MdiButtons>
          </MenuBar>

          <Toolbar>
            <Grip />
            <Drop label="New chart"><NewChartIcon /></Drop>
            <Drop label="Profiles"><ProfilesIcon /></Drop>
            <Separator />
            <ToolButton aria-label="Market Watch"><MarketWatchIcon /></ToolButton>
            <ToolButton aria-label="Data Window"><DataWindowIcon /></ToolButton>
            <ToolButton aria-label="Navigator"><FavoritesIcon /></ToolButton>
            <ToolButton $pressed aria-label="Terminal"><TerminalIcon /></ToolButton>
            <ToolButton aria-label="Strategy Tester"><TesterIcon /></ToolButton>
            <Separator $m={1} />
            <ToolButton $w={80}><NewOrderIcon />New Order</ToolButton>
            <ToolButton aria-label="MetaEditor"><WarnIcon /></ToolButton>
            <ToolButton $w={107} $pressed><ExpertIcon />Expert Advisors</ToolButton>
          </Toolbar>
          <Toolbar>
            <Grip />
            {periods.map(p => <ToolButton key={p} $pressed={p === 'H4'}><PeriodText>{p}</PeriodText></ToolButton>)}
          </Toolbar>
          <Toolbar>
            <Grip />
            <ToolButton $pressed aria-label="Cursor"><CursorIcon /></ToolButton>
            <ToolButton aria-label="Crosshair">{line('M9 1v6M9 11v6M1 9h6M11 9h6', 1.2)}</ToolButton>
            <Separator $m={1} />
            <ToolButton aria-label="Vertical line">{line('M9.500 3v12')}</ToolButton>
            <ToolButton aria-label="Horizontal line">{line('M3 9.500h12')}</ToolButton>
            <ToolButton aria-label="Trendline">{line('M3 15L15 3', 1.2)}</ToolButton>
            <ToolButton aria-label="Equidistant channel"><ChannelIcon /></ToolButton>
            <ToolButton aria-label="Fibonacci retracement"><FiboIcon /></ToolButton>
            <ToolButton aria-label="Text"><LetterA /></ToolButton>
            <ToolButton aria-label="Text label"><LabelIcon /></ToolButton>
            <ToolButton aria-label="Trend by angle"><AngleIcon /></ToolButton>
            <ToolButton aria-label="Gann line"><GannLineIcon /></ToolButton>
            <ToolButton aria-label="Gann grid"><GridIcon /></ToolButton>
            <ToolButton aria-label="Fan"><FanIcon /></ToolButton>
            <Drop label="Arrows"><ArrowsIcon /></Drop>
          </Toolbar>
          <Toolbar $last>
            <Grip />
            <ToolButton aria-label="Bar chart"><BarsIcon /></ToolButton>
            <ToolButton $pressed aria-label="Candlesticks"><CandlesIcon /></ToolButton>
            <ToolButton aria-label="Line chart"><LineIcon /></ToolButton>
            <Separator />
            <ToolButton aria-label="Zoom in"><ZoomIcon /></ToolButton>
            <ToolButton aria-label="Zoom out"><ZoomIcon out /></ToolButton>
            <Separator $m={1} />
            <ToolButton $pressed aria-label="Auto scroll"><AutoScrollIcon /></ToolButton>
            <ToolButton $pressed aria-label="Chart shift"><ShiftIcon /></ToolButton>
            <Separator $m={1} />
            <Drop label="Indicators"><IndicatorIcon /></Drop>
            <Drop label="Periods"><ClockIcon /></Drop>
            <Drop label="Templates"><TemplateIcon /></Drop>
          </Toolbar>

          <Chart />

          <TabStrip $h={21} $indent={4}>
            <Tab $w={81} $active>EURUSD,H4</Tab>
            {chartTabs.map(([t, w], i) => <Tab key={i} $w={w}>{t}</Tab>)}
            <TabScroll>
              <button aria-label="Scroll tabs left"><svg width="5" height="8"><path d="M4 0v8L1 4z" fill="#9a978a" /></svg></button>
              <button aria-label="Scroll tabs right"><svg width="5" height="8"><path d="M1 0v8l3-4z" fill="#9a978a" /></svg></button>
            </TabScroll>
          </TabStrip>

          <Terminal>
            <TerminalCaption>
              <CloseTerminal aria-label="Close terminal"><svg width="7" height="7"><path d="M1 1l5 5M6 1L1 6" stroke="#000" strokeWidth="1.600" /></svg></CloseTerminal>
              <TerminalTitle>Terminal</TerminalTitle>
            </TerminalCaption>
            <TerminalBody>
              <OrderArea>
                <OrderTable>
                  <colgroup>{columns.map(([, w], i) => <col key={i} width={w} />)}</colgroup>
                  <thead>
                    <tr>
                      {columns.map(([c], i) => (
                        <HeadCell key={i} scope="col" $first={i === 0}>{c}{i === 0 && <SortMark>△</SortMark>}</HeadCell>
                      ))}
                    </tr>
                  </thead>
                  <tbody>
                    {orders.map((o, r) => (
                      <OrderRow key={o.id} $alt={r === 1}>
                        <Cell><OrderId><OrderDoc color={o.color} />{o.id}</OrderId></Cell>
                        {o.cells.map((c, i) => <Cell key={i} $last={i === o.cells.length - 1}>{c}</Cell>)}
                      </OrderRow>
                    ))}
                    <SummaryRow>
                      <SummaryCell colSpan={11}>
                        <OrderId><BalanceIcon />{'Balance: 5,000.00  Equity: 4,998.40  Margin: 25.91  Free margin: 4,972.49  Margin level: 19292.29%'}</OrderId>
                      </SummaryCell>
                      <SummaryCell $right>-1.60</SummaryCell>
                    </SummaryRow>
                  </tbody>
                </OrderTable>
              </OrderArea>
              <TabStrip $h={21} $indent={2}>
                <Tab $w={49} $active>Trade</Tab>
                {terminalTabs.map(([t, w]) => <Tab key={t} $w={w}>{t}</Tab>)}
              </TabStrip>
            </TerminalBody>
          </Terminal>

          <StatusBar>
            <Pane $w={295} $first>For Help, press F1</Pane>
            <Pane $w={109}>Default</Pane>
            {panes.map((w, i) => <Pane key={i} $w={w} />)}
            <Pane>
              <svg width="24" height="12" shapeRendering="crispEdges" aria-hidden="true">
                {[0, 1, 2, 3, 4, 5, 6, 7].map(i => (
                  <g key={i}>
                    <rect x={i * 3} y="0" width="2" height={10 - i} fill="#7c8c10" />
                    <rect x={i * 3} y={10 - i} width="2" height={2 + i} fill="#1c4864" />
                  </g>
                ))}
              </svg>
              <Traffic>2647/3 kb</Traffic>
              <Resize><svg width="14" height="14"><path d="M1 14L14 1M5 14l9-9M9 14l5-5" stroke="#a8a594" strokeWidth="1.500" /></svg></Resize>
            </Pane>
          </StatusBar>
        </Client>
      </AppWindow>

      <Taskbar>
        <StartButton><WindowsFlag />démarrer</StartButton>
        <QuickLaunch>
          <DesktopIcon /><IeIcon /><ChromeIcon /><Chevron>»</Chevron>
        </QuickLaunch>
        <Tasks>
          {tasks.map(([icon, label, active], i) => <TaskButton key={i} $active={active}>{icon}{label}</TaskButton>)}
        </Tasks>
        <Language>FR</Language>
        <Tray>
          <HideIcons aria-label="Hide tray icons">
            <svg width="18" height="18"><circle cx="9" cy="9" r="8" fill="#3c8cf0" stroke="#b8dcfc" /><path d="M11 5L7 9l4 4" fill="none" stroke="#fff" strokeWidth="2" /></svg>
          </HideIcons>
          <ShieldIcon /><NetworkIcon /><BuddyIcon /><SkypeIcon /><WirelessIcon /><IdmIcon /><NetworkIcon off /><GlobeIcon /><SIcon />
          <Clock>16:04</Clock>
        </Tray>
      </Taskbar>
    </Screen>
  );
}
